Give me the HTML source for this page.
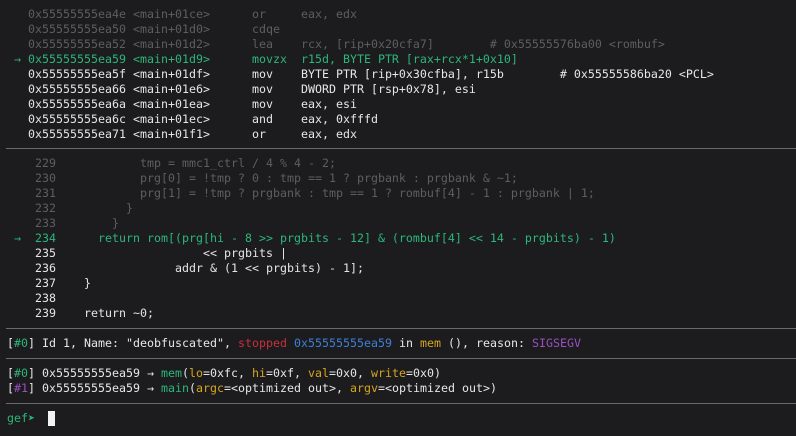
<!DOCTYPE html>
<html><head><meta charset="utf-8"><style>
html,body{margin:0;padding:0;background:#1c1c1e;width:796px;height:436px;overflow:hidden}
.l{position:absolute;left:14px;height:15px;line-height:15px;white-space:pre;font-family:"DejaVu Sans Mono","Liberation Mono",monospace;font-size:11.63px;color:#e6e6e6}
.g{color:#5e5e5e}.gr{color:#2cb67a}.r{color:#c9303a}.b{color:#3d80d6}.y{color:#d6a51c}.p{color:#9b4fc0}
.sep{position:absolute;left:6px;right:0;height:1px;background:#6a6a6a}
.cur{position:absolute;left:48px;top:411px;width:7px;height:15px;background:#f2f2f2}
</style></head><body>
<div class="l g" style="top:6.5px">  0x55555555ea4e &lt;main+01ce&gt;      or     eax, edx</div>
<div class="l g" style="top:21.5px">  0x55555555ea50 &lt;main+01d0&gt;      cdqe</div>
<div class="l g" style="top:36.5px">  0x55555555ea52 &lt;main+01d2&gt;      lea    rcx, [rip+0x20cfa7]        # 0x55555576ba00 &lt;rombuf&gt;</div>
<div class="l gr" style="top:51.5px">→ 0x55555555ea59 &lt;main+01d9&gt;      movzx  r15d, BYTE PTR [rax+rcx*1+0x10]</div>
<div class="l" style="top:66.5px">  0x55555555ea5f &lt;main+01df&gt;      mov    BYTE PTR [rip+0x30cfba], r15b        # 0x55555586ba20 &lt;PCL&gt;</div>
<div class="l" style="top:81.5px">  0x55555555ea66 &lt;main+01e6&gt;      mov    DWORD PTR [rsp+0x78], esi</div>
<div class="l" style="top:96.5px">  0x55555555ea6a &lt;main+01ea&gt;      mov    eax, esi</div>
<div class="l" style="top:111.5px">  0x55555555ea6c &lt;main+01ec&gt;      and    eax, 0xfffd</div>
<div class="l" style="top:126.5px">  0x55555555ea71 &lt;main+01f1&gt;      or     eax, edx</div>
<div class="sep" style="top:148px"></div>
<div class="l g" style="top:155.5px">   229            tmp = mmc1_ctrl / 4 % 4 - 2;</div>
<div class="l g" style="top:170.5px">   230            prg[0] = !tmp ? 0 : tmp == 1 ? prgbank : prgbank &amp; ~1;</div>
<div class="l g" style="top:185.5px">   231            prg[1] = !tmp ? prgbank : tmp == 1 ? rombuf[4] - 1 : prgbank | 1;</div>
<div class="l g" style="top:200.5px">   232          }</div>
<div class="l g" style="top:215.5px">   233        }</div>
<div class="l gr" style="top:230.5px">→  234      return rom[(prg[hi - 8 &gt;&gt; prgbits - 12] &amp; (rombuf[4] &lt;&lt; 14 - prgbits) - 1)</div>
<div class="l" style="top:245.5px">   235                     &lt;&lt; prgbits |</div>
<div class="l" style="top:260.5px">   236                 addr &amp; (1 &lt;&lt; prgbits) - 1];</div>
<div class="l" style="top:275.5px">   237    }</div>
<div class="l" style="top:290.5px">   238</div>
<div class="l" style="top:305.5px">   239    return ~0;</div>
<div class="sep" style="top:328px"></div>
<div class="l" style="top:335.5px;left:7px">[<span class="gr">#0</span>] Id 1, Name: "deobfuscated", <span class="r">stopped</span> <span class="b">0x55555555ea59</span> in <span class="y">mem</span> (), reason: <span class="p">SIGSEGV</span></div>
<div class="sep" style="top:358px"></div>
<div class="l" style="top:365.5px;left:7px">[<span class="gr">#0</span>] 0x55555555ea59 → <span class="gr">mem</span>(<span class="y">lo</span>=0xfc, <span class="y">hi</span>=0xf, <span class="y">val</span>=0x0, <span class="y">write</span>=0x0)</div>
<div class="l" style="top:380.5px;left:7px">[<span class="p">#1</span>] 0x55555555ea59 → <span class="gr">main</span>(<span class="y">argc</span>=&lt;optimized out&gt;, <span class="y">argv</span>=&lt;optimized out&gt;)</div>
<div class="sep" style="top:403px"></div>
<div class="l gr" style="top:410.5px;left:7px">gef➤</div>
<div class="cur"></div>
</body></html>
